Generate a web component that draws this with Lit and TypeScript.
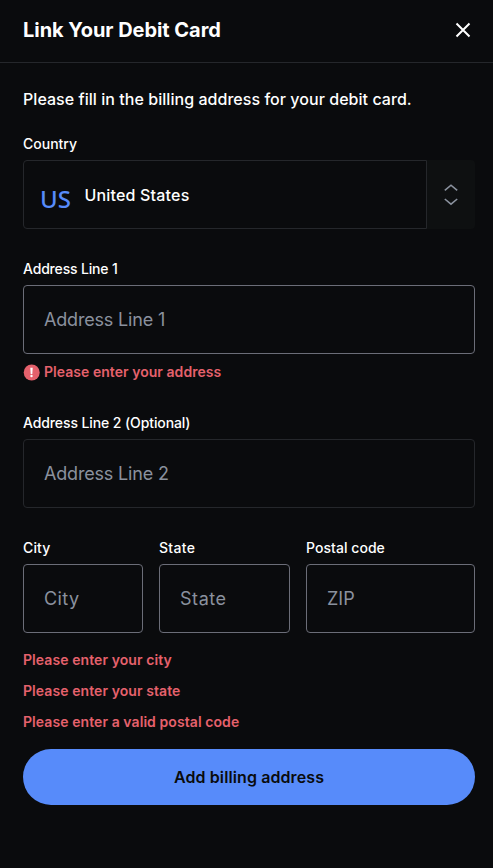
import { LitElement, html, css } from "lit";
import { customElement } from "lit/decorators.js";

@customElement("text-field")
class TextField extends LitElement {
  static properties = {
    label: {},
    placeholder: {},
    invalid: { type: Boolean, reflect: true },
  };
  declare label: string;
  declare placeholder: string;
  declare invalid: boolean;

  static styles = css`
    :host { display: block; min-width: 0; }
    .label { display: block; height: 17px; margin-bottom: 8px; font-size: 14px; line-height: 18px; font-weight: 500; letter-spacing: var(--label-tracking, 0); white-space: nowrap; }
    .input { box-sizing: border-box; display: block; width: 100%; height: 69px; padding: 0 20px; border: 1px solid #25272b; border-radius: 4px; background: transparent; color: #fff; font: inherit; font-size: 18px; letter-spacing: var(--input-tracking, 0); outline: none; }
    .input::placeholder { color: #8a919e; opacity: 1; }
    :host([invalid]) .input { border-color: #6b6d78; }
  `;

  render() {
    return html`<label class="label" for="input">${this.label}</label>
      <input id="input" class="input" placeholder=${this.placeholder} />`;
  }
}

@customElement("app-root")
class AppRoot extends LitElement {
  static styles = css`
    :host { display: block; box-sizing: border-box; height: 868px; overflow: hidden; background: #0a0b0d; color: #fff; font-family: Inter, "Liberation Sans", sans-serif; }
    .header { box-sizing: border-box; display: flex; align-items: center; justify-content: space-between; height: 63px; padding: 0 22px 2px 23px; border-bottom: 1px solid #25272b; }
    .title { margin: 0; font-size: 20px; line-height: 28px; font-weight: 700; letter-spacing: -0.04px; }
    .close { display: block; width: 16px; height: 16px; }
    .form { display: flex; flex-direction: column; padding: 24px 18px 0 23px; }
    .intro { margin: 0 0 25px; height: 24px; font-size: 16px; line-height: 24px; font-weight: 500; letter-spacing: 0.045px; white-space: nowrap; }
    .label { height: 16px; margin-bottom: 8px; font-size: 14px; line-height: 16px; font-weight: 500; }
    .select { display: flex; height: 69px; margin-bottom: 31px; }
    .value { box-sizing: border-box; flex: 1; display: flex; align-items: center; padding-left: 16px; border: 1px solid #25272b; border-radius: 4px 0 0 4px; font-size: 16px; font-weight: 500; letter-spacing: 0.18px; }
    .code { width: 44.5px; padding-top: 8px; color: #578bfa; font: 500 24px/32px "Noto Sans", sans-serif; letter-spacing: 0; }
    .stepper { display: flex; align-items: center; justify-content: center; width: 48px; border-radius: 0 4px 4px 0; background: #0e1011; }
    .line1 { --label-tracking: -0.17px; --input-tracking: -0.18px; }
    .line2 { --label-tracking: -0.1px; --input-tracking: -0.18px; }
    .city { --label-tracking: 0.15px; --input-tracking: 0.4px; }
    .state { --label-tracking: 0.3px; --input-tracking: 0.55px; }
    .postal { --label-tracking: 0.05px; }
    .error { display: flex; align-items: center; gap: 4px; height: 20px; color: #e5616c; font-size: 14px; line-height: 20px; font-weight: 600; letter-spacing: 0.075px; white-space: nowrap; }
    .inline { margin: 8px 0 32px; letter-spacing: 0.04px; }
    .alert { margin-top: 1px; }
    .row { display: grid; grid-template-columns: 120px 131px 169px; gap: 16px; margin-top: 31px; }
    .errors { display: grid; gap: 11px; margin: 17px 0; }
    .submit { height: 56px; padding: 0; border: 0; border-radius: 28px; background: #578bfa; color: #0a0b0d; font: inherit; font-size: 16px; font-weight: 600; letter-spacing: 0.1px; }
  `;

  render() {
    return html`
      <header class="header">
        <h1 class="title">Link Your Debit Card</h1>
        <svg class="close" viewBox="0 0 16 16" fill="none" stroke="#fff" stroke-width="2"><path d="M1.5 1.5 14.5 14.5M14.5 1.5 1.5 14.5" /></svg>
      </header>
      <main class="form">
        <p class="intro">Please fill in the billing address for your debit card.</p>
        <div class="label">Country</div>
        <div class="select">
          <div class="value"><span class="code">US</span><span>United States</span></div>
          <div class="stepper">
            <svg width="14" height="22" viewBox="0 0 14 22" fill="none" stroke="#8a919e" stroke-width="1.6"><path d="M.8 6.3 7 1.2 13.2 6.3M.8 15 7 20.2 13.2 15" /></svg>
          </div>
        </div>
        <text-field class="line1" label="Address Line 1" placeholder="Address Line 1" invalid></text-field>
        <div class="error inline">
          <svg class="alert" width="17" height="17" viewBox="0 0 17 17"><circle cx="8.7" cy="8.5" r="8" fill="#e5616c" /><path d="M7.3 3.8h2.4L9.3 10H7.7Z" fill="#fff" /><circle cx="8.5" cy="12" r="1.2" fill="#fff" /></svg>
          <span>Please enter your address</span>
        </div>
        <text-field class="line2" label="Address Line 2 (Optional)" placeholder="Address Line 2"></text-field>
        <div class="row">
          <text-field class="city" label="City" placeholder="City" invalid></text-field>
          <text-field class="state" label="State" placeholder="State" invalid></text-field>
          <text-field class="postal" label="Postal code" placeholder="ZIP" invalid></text-field>
        </div>
        <div class="errors">
          <div class="error">Please enter your city</div>
          <div class="error">Please enter your state</div>
          <div class="error">Please enter a valid postal code</div>
        </div>
        <button class="submit">Add billing address</button>
      </main>
    `;
  }
}
